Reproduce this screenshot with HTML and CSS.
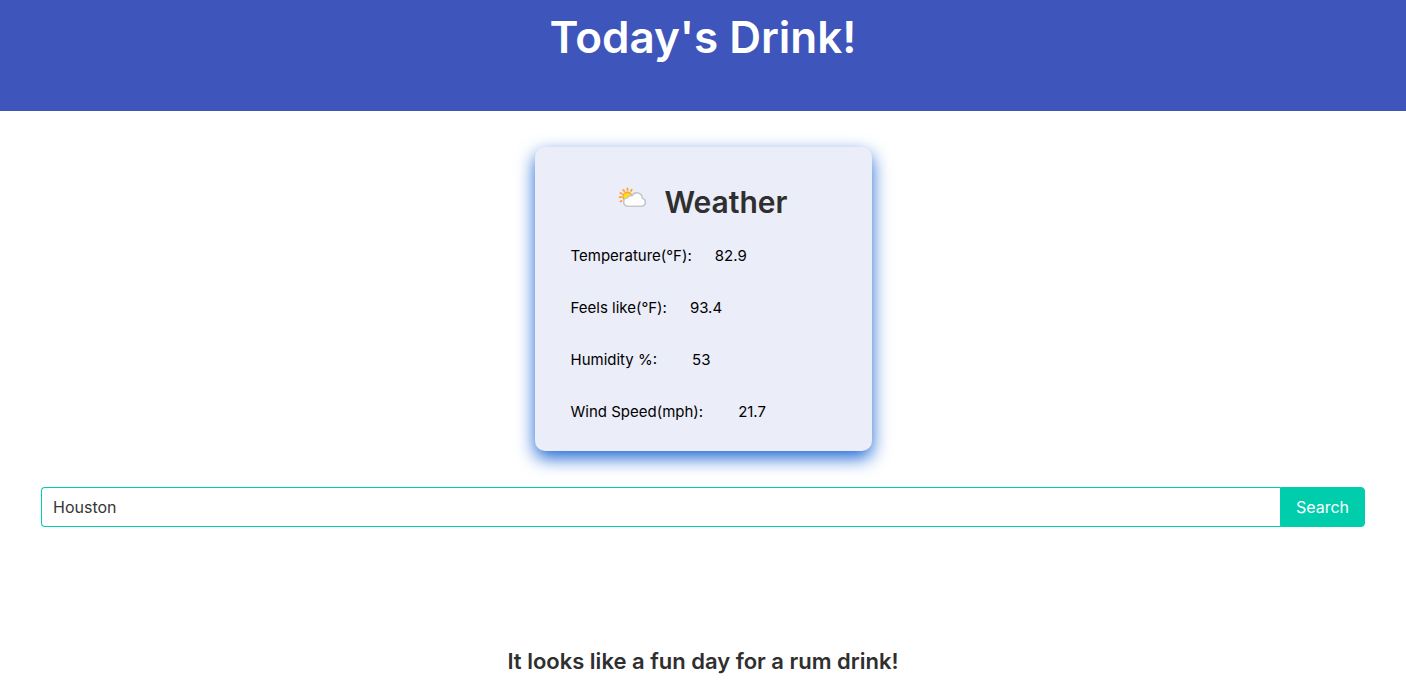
FILE: index.html
```
<!DOCTYPE html>
<html lang="en">
<head>
<meta charset="utf-8">
<meta name="viewport" content="width=device-width, initial-scale=1">
<title>Today's Drink!</title>
<link rel="stylesheet" href="styles.css">
</head>
<body>
<header class="hero">
  <h1 class="hero-title">Today's Drink!</h1>
</header>
<main class="main">
  <section class="weather">
    <div class="weather-head">
      <svg class="weather-icon" viewBox="0 0 30 22" aria-hidden="true">
        <g stroke="#ffa12e" stroke-width="1.8" stroke-linecap="round">
          <path d="M2.6 14.4l1-.4M1.6 10.2h1.6M2.4 6l1.3.7M5.3 2.9l.9 1.2M9.5 1.4v1.6M13.7 2.6l-.8 1.4"/>
        </g>
        <circle cx="9.4" cy="9.6" r="4.4" fill="#ffdc14" stroke="#ffa12e" stroke-width="1.4"/>
        <path d="M10 19.2a4.2 4.2 0 0 1-.3-8.4 3.4 3.4 0 0 1 4.1-2 5.6 5.6 0 0 1 10.5 2.5 4.1 4.1 0 0 1 .2 7.9z" fill="#fff" stroke="#c6c9cb" stroke-width="1.6"/>
      </svg>
      <h2 class="weather-title">Weather</h2>
    </div>
    <dl class="readings">
      <div class="reading"><dt>Temperature(°F):</dt><dd>82.9</dd></div>
      <div class="reading"><dt>Feels like(°F):</dt><dd>93.4</dd></div>
      <div class="reading reading-wide"><dt>Humidity %:</dt><dd>53</dd></div>
      <div class="reading reading-wide"><dt>Wind Speed(mph):</dt><dd>21.7</dd></div>
    </dl>
  </section>
  <form class="search">
    <input class="search-input" type="text" value="Houston" aria-label="City">
    <button class="search-button" type="button">Search</button>
  </form>
  <h3 class="message">It looks like a fun day for a rum drink!</h3>
</main>
</body>
</html>
```
FILE: styles.css
```
* {
  box-sizing: border-box;
  margin: 0;
  padding: 0;
}

body {
  font-family: Inter, "Liberation Sans", sans-serif;
  font-size: 16px;
  line-height: 24px;
  color: #2f2f2f;
  background: #fff;
}

.hero {
  padding: 10px 24px 47px;
  background: #3e56bb;
  text-align: center;
}

.hero-title {
  font-size: 44px;
  font-weight: 600;
  line-height: 54px;
  color: #fff;
}

.main {
  padding: 36px 41px 0;
}

.weather {
  width: 337px;
  max-width: 100%;
  margin: 0 auto 36px;
  padding: 36px 36px 27px;
  border-radius: 10px;
  background: #ebedf9;
  box-shadow: 0 7px 18px #1c66d4;
}

.weather-head {
  display: flex;
  justify-content: center;
  gap: 16px;
  margin-bottom: 23px;
}

.weather-icon {
  width: 30px;
  height: 22px;
  margin-top: 4px;
}

.weather-title {
  font-size: 30px;
  font-weight: 600;
  line-height: 38px;
}

.readings {
  display: grid;
  gap: 28px;
  font-size: 15px;
  color: #000;
}

.reading {
  display: flex;
  gap: 23px;
}

.reading-wide {
  gap: 35px;
}

.search {
  display: flex;
}

.search-input,
.search-button {
  height: 40px;
  border: 1px solid #00cdac;
  font: inherit;
}

.search-input {
  flex: 1;
  min-width: 0;
  padding: 0 11px;
  border-right: 0;
  border-radius: 4px 0 0 4px;
  background: #fff;
  color: #363636;
}

.search-button {
  padding: 0 15px;
  border-radius: 0 4px 4px 0;
  background: #00cdac;
  color: #fff;
}

.message {
  margin-top: 120px;
  font-size: 22px;
  font-weight: 600;
  line-height: 28px;
  text-align: center;
}
```
